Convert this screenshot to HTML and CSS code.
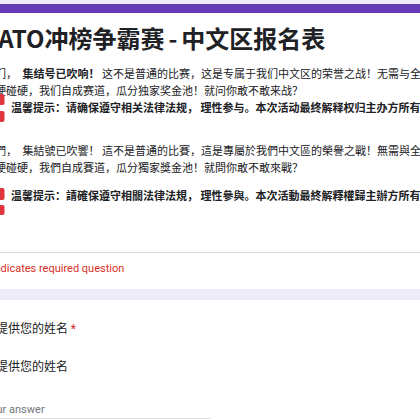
FILE: index.html
```html
<!DOCTYPE html>
<html lang="zh-CN">
<head>
<meta charset="utf-8">
<title>ATO冲榜争霸赛-中文区报名表</title>
<link rel="stylesheet" href="styles.css">
</head>
<body>
<div class="page">
  <div class="card card-top">
    <div class="head">
      <h1 class="title">$ATO冲榜争霸赛<span class="dash">-</span>中文区报名表</h1>
      <div class="desc">
        <div class="lines">家们，&ensp;<b>集结号已吹响！</b> 这不是普通的比赛，这是专属于我们中文区的荣誉之战！无需与全球玩<br>家硬碰硬，我们自成赛道，瓜分独家奖金池！就问你敢不敢来战？</div>
        <div class="tip"><svg class="mark" viewBox="0 0 27 17"><rect x="13.5" y="-5" width="7" height="11" rx="2"/><rect x="13.5" y="12" width="7" height="11" rx="2"/></svg><b>温馨提示：请确保遵守相关法律法规， 理性参与。本次活动最终解释权归主办方所有。</b></div>
      </div>
      <div class="desc desc-tc">
        <div class="lines">家們，&ensp;集結號已吹響！ 這不是普通的比賽，這是專屬於我們中文區的榮譽之戰！無需與全球玩<br>家硬碰硬，我們自成賽道，瓜分獨家獎金池！就問你敢不敢來戰？</div>
        <div class="tip tip-gap"><svg class="mark" viewBox="0 0 27 17"><rect x="13.5" y="1" width="7" height="12" rx="2"/><rect x="13.5" y="18" width="7" height="10" rx="2"/></svg><b>溫馨提示：請確保遵守相關法律法規， 理性參與。本次活動最終解釋權歸主辦方所有。</b></div>
      </div>
    </div>
    <div class="foot">* Indicates required question</div>
  </div>
  <div class="card question">
    <div class="q-title">请提供您的姓名 <span class="req">*</span></div>
    <div class="q-desc">請提供您的姓名</div>
    <div class="answer">Your answer</div>
  </div>
</div>
</body>
</html>
```

FILE: styles.css
```css
body {
  margin: 0;
  width: 420px;
  height: 420px;
  overflow: hidden;
  background: #f0ebf8;
  font-family: "Noto Sans CJK SC", sans-serif;
  color: #202124;
}

.page {
  width: 720px;
  margin-left: -40px;
  padding-top: 4px;
}

.card {
  background: #ffffff;
  border-radius: 8px;
}

.card-top {
  border-top: 9px solid #673ab7;
}

.head {
  padding: 9px 24px 48px;
}

.title {
  margin: 0;
  font-size: 24px;
  font-weight: 700;
  line-height: 32px;
  white-space: nowrap;
}

.dash {
  margin: 0 4px;
}

.desc {
  margin-top: 11px;
  font-size: 11px;
  line-height: 17px;
  white-space: nowrap;
}

.desc-tc {
  margin-top: 26px;
}

.tip-gap {
  margin-top: 11px;
}

.mark {
  display: inline-block;
  vertical-align: top;
  width: 27px;
  height: 17px;
  overflow: visible;
  fill: #e0353d;
}

.foot {
  border-top: 1px solid #dadce0;
  padding: 8px 24px 12px;
  font-family: Roboto, sans-serif;
  font-size: 11px;
  line-height: 16px;
  color: #d93025;
  white-space: nowrap;
}

.question {
  margin-top: 11px;
  padding: 19px 24px 0;
  height: 200px;
}

.q-title,
.q-desc {
  font-size: 12px;
  line-height: 18px;
  white-space: nowrap;
}

.q-desc {
  margin-top: 19px;
}

.req {
  color: #d93025;
  font-family: Roboto, sans-serif;
}

.answer {
  margin-top: 26px;
  width: 227px;
  font-family: Roboto, sans-serif;
  font-size: 11px;
  line-height: 17px;
  color: #70757a;
  border-bottom: 1px solid #e0e0e0;
}
```
